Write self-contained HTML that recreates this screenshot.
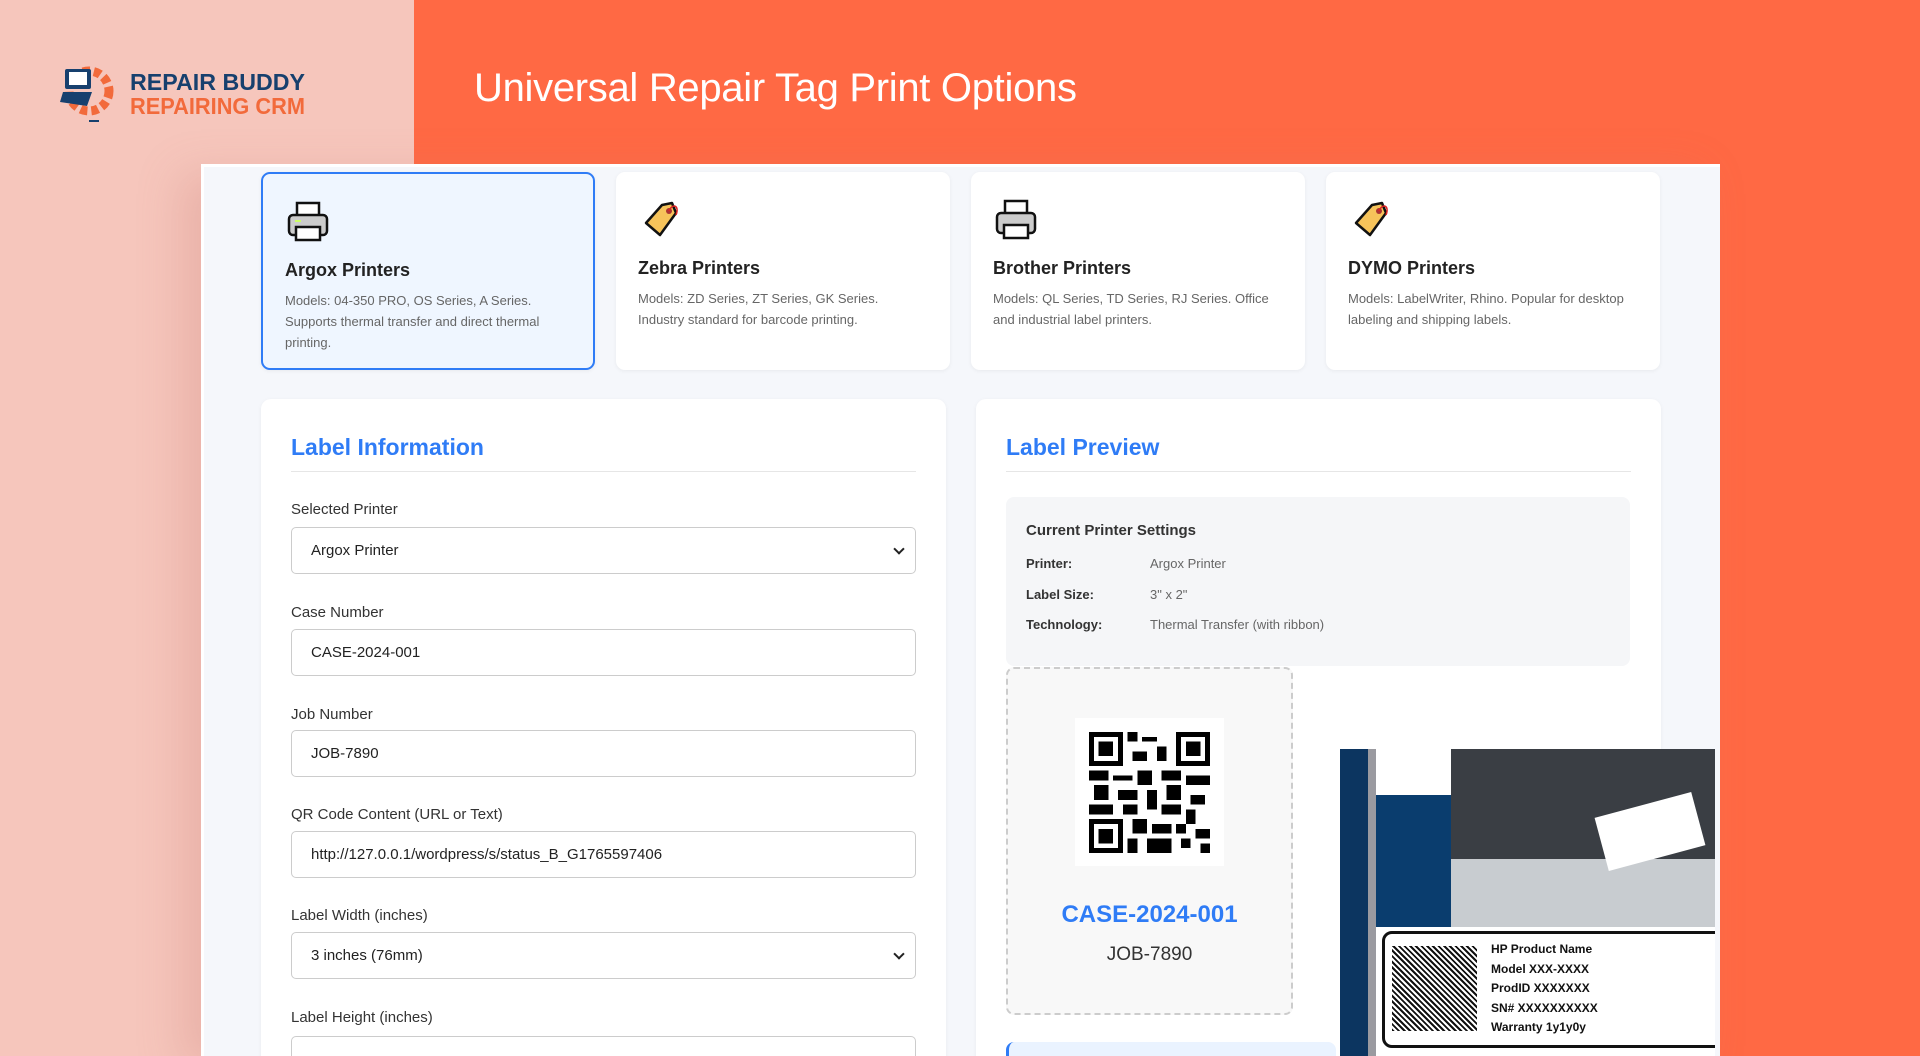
<!DOCTYPE html>
<html><head><meta charset="utf-8"><style>
*{box-sizing:border-box;margin:0;padding:0}
html{width:1920px;height:1056px;overflow:hidden}
body{width:1920px;height:1056px;overflow:hidden;background:#ff6944;font-family:"Liberation Sans",sans-serif;position:relative}
.pink{position:absolute;left:0;top:0;width:414px;height:1056px;background:#f6c6bc}
.logo{position:absolute;left:59px;top:66px}
.title{position:absolute;left:474px;top:66px;color:#fff;font-size:40px;letter-spacing:-0.3px}
.main{position:absolute;left:201px;top:164px;width:1519px;height:892px;background:#f5f7fb;border-left:3px solid #fff;border-top:3px solid #fff;box-shadow:-20px 10px 40px rgba(200,120,110,.25);overflow:hidden}
.card{position:absolute;top:5px;width:334px;height:198px;background:#fff;border-radius:9px;box-shadow:0 1px 4px rgba(0,0,0,.06);padding:0 22px}
.card.sel{background:#eff6ff;border:2px solid #2f7cf6}
.card svg{position:absolute;left:24px;top:27px}
.card h3{position:absolute;left:22px;top:86px;font-size:18px;color:#222;font-weight:bold}
.card p{position:absolute;left:22px;top:116px;right:34px;font-size:13px;line-height:21px;color:#666}
.panel{position:absolute;top:232px;width:685px;height:700px;background:#fff;border-radius:10px;box-shadow:0 1px 4px rgba(0,0,0,.05)}
.panel h2{position:absolute;left:30px;top:35px;font-size:23px;color:#2f7cf6;font-weight:bold}
.panel .hr{position:absolute;left:30px;right:30px;top:72px;border-top:1px solid #e6e6e6}
.lbl{position:absolute;left:30px;font-size:15px;color:#333}
.inp{position:absolute;left:30px;width:625px;height:47px;border:1px solid #ccc;border-radius:5px;font-size:15px;color:#222;padding:0 19px;line-height:45px}
.inp.s:after{content:"";position:absolute;right:12px;top:17px;width:6px;height:6px;border-right:2px solid #222;border-bottom:2px solid #222;transform:rotate(45deg)}
.set{position:absolute;left:30px;top:98px;width:624px;height:169px;background:#f5f6f8;border-radius:8px}
.set b{position:absolute;left:20px;top:25px;font-size:15px;color:#333}
.row{position:absolute;left:20px;font-size:13px;color:#333;font-weight:bold}
.row span{position:absolute;left:124px;font-weight:normal;color:#666;white-space:nowrap}
.prev{position:absolute;left:30px;top:268px;width:287px;height:348px;border:2px dashed #ccc;border-radius:8px;background:#f8f8f8}
</style></head><body>
<div class="pink"></div>
<div class="logo">
<svg width="250" height="60" viewBox="0 0 250 60">
<circle cx="30" cy="25" r="20" fill="none" stroke="#f26a3b" stroke-width="9" stroke-dasharray="7 4"/>
<circle cx="30" cy="25" r="15" fill="#f6c6bc"/>
<rect x="6" y="3" width="26" height="20" rx="2" fill="#17406e"/>
<rect x="10" y="6" width="18" height="13" fill="#fff"/>
<path d="M4 26 L33 26 L28 40 L1 36 Z" fill="#17406e"/>
<rect x="30" y="54" width="10" height="2" fill="#17406e"/>
<text x="71" y="24" font-family="Liberation Sans" font-weight="bold" font-size="23" fill="#17406e" textLength="175" lengthAdjust="spacingAndGlyphs">REPAIR BUDDY</text>
<text x="71" y="48" font-family="Liberation Sans" font-weight="bold" font-size="23" fill="#f26a3b" textLength="175" lengthAdjust="spacingAndGlyphs">REPAIRING CRM</text>
</svg></div>
<div class="title">Universal Repair Tag Print Options</div>
<div class="main">
<div class="card sel" style="left:57px"><svg width="42" height="42" viewBox="0 0 42 42"><rect x="10" y="2" width="22" height="14" fill="#fff" stroke="#111" stroke-width="2.5"/><rect x="2" y="14" width="38" height="20" rx="4" fill="#ccc" stroke="#111" stroke-width="2.5"/><rect x="9" y="26" width="24" height="13" fill="#fff" stroke="#111" stroke-width="2.5"/><rect x="8" y="19" width="6" height="2" fill="#cf6"/></svg><h3>Argox Printers</h3><p>Models: 04-350 PRO, OS Series, A Series. Supports thermal transfer and direct thermal printing.</p></div>
<div class="card" style="left:412px"><svg width="42" height="42" viewBox="0 0 42 42"><path d="M6 24 L22 6 L32 4 L36 14 L20 36 Z" fill="#f6c35a" stroke="#111" stroke-width="2.5" stroke-linejoin="round"/><circle cx="29" cy="12" r="3" fill="#a33"/><path d="M29 12 C32 4 40 6 36 16" fill="none" stroke="#d22" stroke-width="1.5"/></svg><h3>Zebra Printers</h3><p>Models: ZD Series, ZT Series, GK Series. Industry standard for barcode printing.</p></div>
<div class="card" style="left:767px"><svg width="42" height="42" viewBox="0 0 42 42"><rect x="10" y="2" width="22" height="14" fill="#fff" stroke="#111" stroke-width="2.5"/><rect x="2" y="14" width="38" height="20" rx="4" fill="#ccc" stroke="#111" stroke-width="2.5"/><rect x="9" y="26" width="24" height="13" fill="#fff" stroke="#111" stroke-width="2.5"/></svg><h3>Brother Printers</h3><p>Models: QL Series, TD Series, RJ Series. Office and industrial label printers.</p></div>
<div class="card" style="left:1122px"><svg width="42" height="42" viewBox="0 0 42 42"><path d="M6 24 L22 6 L32 4 L36 14 L20 36 Z" fill="#f6c35a" stroke="#111" stroke-width="2.5" stroke-linejoin="round"/><circle cx="29" cy="12" r="3" fill="#a33"/><path d="M29 12 C32 4 40 6 36 16" fill="none" stroke="#d22" stroke-width="1.5"/></svg><h3>DYMO Printers</h3><p>Models: LabelWriter, Rhino. Popular for desktop labeling and shipping labels.</p></div>

<div class="panel" style="left:57px">
<h2>Label Information</h2><div class="hr"></div>
<div class="lbl" style="top:102px">Selected Printer</div><div class="inp s" style="top:128px">Argox Printer</div>
<div class="lbl" style="top:205px">Case Number</div><div class="inp" style="top:230px">CASE-2024-001</div>
<div class="lbl" style="top:307px">Job Number</div><div class="inp" style="top:331px">JOB-7890</div>
<div class="lbl" style="top:407px">QR Code Content (URL or Text)</div><div class="inp" style="top:432px">http://127.0.0.1/wordpress/s/status_B_G1765597406</div>
<div class="lbl" style="top:508px">Label Width (inches)</div><div class="inp s" style="top:533px">3 inches (76mm)</div>
<div class="lbl" style="top:610px">Label Height (inches)</div><div class="inp" style="top:637px"></div>
</div>

<div class="panel" style="left:772px">
<h2>Label Preview</h2><div class="hr"></div>
<div class="set"><b>Current Printer Settings</b>
<div class="row" style="top:59px">Printer:<span>Argox Printer</span></div>
<div class="row" style="top:90px">Label Size:<span>3" x 2"</span></div>
<div class="row" style="top:120px">Technology:<span>Thermal Transfer (with ribbon)</span></div></div>
<div class="prev">
<div style="position:absolute;left:67px;top:49px;width:149px;height:148px;background:#fff">
<svg width="121" height="121" viewBox="0 0 25 25" style="position:absolute;left:14px;top:14px" shape-rendering="crispEdges">
<g fill="#000"><path d="M0 0h7v7h-7zM1 1v5h5v-5zM2 2h3v3h-3z" fill-rule="evenodd"/><path d="M18 0h7v7h-7zM19 1v5h5v-5zM20 2h3v3h-3z" fill-rule="evenodd"/><path d="M0 18h7v7h-7zM1 19v5h5v-5zM2 20h3v3h-3z" fill-rule="evenodd"/>
<rect x="8" y="0" width="2" height="2"/><rect x="11" y="1" width="3" height="1"/><rect x="14" y="3" width="2" height="3"/><rect x="9" y="4" width="3" height="2"/><rect x="0" y="8" width="4" height="2"/><rect x="5" y="9" width="4" height="1"/><rect x="10" y="8" width="3" height="3"/><rect x="15" y="8" width="4" height="2"/><rect x="20" y="9" width="5" height="2"/><rect x="1" y="11" width="3" height="3"/><rect x="6" y="12" width="4" height="2"/><rect x="12" y="12" width="2" height="4"/><rect x="16" y="11" width="3" height="3"/><rect x="21" y="13" width="3" height="2"/><rect x="0" y="15" width="5" height="2"/><rect x="7" y="15" width="3" height="2"/><rect x="15" y="15" width="4" height="2"/><rect x="20" y="16" width="2" height="3"/><rect x="9" y="18" width="3" height="3"/><rect x="13" y="19" width="4" height="2"/><rect x="18" y="19" width="2" height="2"/><rect x="22" y="20" width="3" height="2"/><rect x="8" y="22" width="2" height="3"/><rect x="12" y="22" width="5" height="3"/><rect x="19" y="22" width="2" height="2"/><rect x="23" y="23" width="2" height="2"/></g></svg></div>
<div style="position:absolute;left:0;right:0;top:232px;text-align:center;font-size:24px;font-weight:bold;color:#2f7cf6">CASE-2024-001</div>
<div style="position:absolute;left:0;right:0;top:275px;text-align:center;font-size:19px;color:#333">JOB-7890</div>
</div>
<div style="position:absolute;left:30px;top:643px;width:330px;height:40px;background:#eaf3ff;border-left:3px solid #2f7cf6;border-radius:8px"></div>
</div>
</div>
<div style="position:absolute;left:1340px;top:749px;width:375px;height:307px;background:#fff;overflow:hidden">
<div style="position:absolute;left:0;top:0;width:28px;height:307px;background:#0c3560"></div>
<div style="position:absolute;left:28px;top:0;width:8px;height:307px;background:#9a9aa0"></div>
<div style="position:absolute;left:36px;top:46px;width:76px;height:132px;background:#0a3d6e"></div>
<div style="position:absolute;left:111px;top:0;width:264px;height:178px;background:#3a3e44"></div>
<div style="position:absolute;left:111px;top:110px;width:264px;height:68px;background:#c8ccd0"></div>
<div style="position:absolute;left:260px;top:55px;width:100px;height:55px;background:#fff;transform:rotate(-15deg)"></div>
<div style="position:absolute;left:42px;top:182px;width:345px;height:117px;border:3px solid #111;border-radius:10px;background:#fff">
<div style="position:absolute;left:7px;top:12px;width:85px;height:85px;background:repeating-linear-gradient(45deg,#111 0 2px,#fff 2px 4px)"></div>
<div style="position:absolute;left:106px;top:6px;font-size:12px;line-height:19.5px;font-weight:bold;color:#111">HP Product Name<br>Model XXX-XXXX<br>ProdID XXXXXXX<br>SN# XXXXXXXXXX<br>Warranty 1y1y0y</div></div>
</div>
</body></html>
